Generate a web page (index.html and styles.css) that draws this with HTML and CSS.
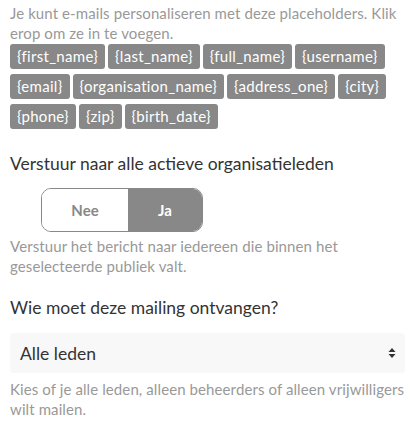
FILE: index.html
```html
<!DOCTYPE html>
<html>
<head>
<meta charset="utf-8">
<link rel="stylesheet" href="styles.css">
</head>
<body>
<div class="page">
  <p class="help first">Je kunt e-mails personaliseren met deze placeholders. Klik erop om ze in te voegen.</p>
  <div class="tags">
    <span class="tag">{first_name}</span>
    <span class="tag">{last_name}</span>
    <span class="tag">{full_name}</span>
    <span class="tag">{username}</span>
    <span class="tag">{email}</span>
    <span class="tag">{organisation_name}</span>
    <span class="tag">{address_one}</span>
    <span class="tag">{city}</span>
    <span class="tag">{phone}</span>
    <span class="tag">{zip}</span>
    <span class="tag">{birth_date}</span>
  </div>

  <div class="field send">
    <label class="label">Verstuur naar alle actieve organisatieleden</label>
    <div class="toggle">
      <span class="opt off">Nee</span>
      <span class="opt on">Ja</span>
    </div>
    <p class="help">Verstuur het bericht naar iedereen die binnen het geselecteerde publiek valt.</p>
  </div>

  <div class="field who">
    <label class="label">Wie moet deze mailing ontvangen?</label>
    <div class="select">
      <span class="value">Alle leden</span>
      <svg class="arrows" width="8" height="12" viewBox="0 0 8 12"><path d="M4 1 L7.5 5 H0.5 Z M4 11 L7.5 7 H0.5 Z" fill="#333"/></svg>
    </div>
    <p class="help">Kies of je alle leden, alleen beheerders of alleen vrijwilligers wilt mailen.</p>
  </div>
</div>
</body>
</html>
```
FILE: styles.css
```css
* { box-sizing: border-box; }
html, body { margin: 0; padding: 0; background: #fff; }
body { font-family: Lato, "Open Sans", sans-serif; color: #333; }
.page { padding: 0 13px 0 10px; }
.help { margin: 0; font-size: 15px; letter-spacing: 0.1px; line-height: 20px; color: #999; }
.help.first { padding-top: 3px; }
.tags { display: flex; flex-wrap: wrap; gap: 5px 3px; margin-top: 1px; width: 385px; }
.tag { background: #888; color: #fff; font-size: 15px; letter-spacing: 0.3px; height: 25px; line-height: 25px; padding: 0 7px; border-radius: 3px; }
.field.send { margin-top: 24px; }
.label { display: block; font-size: 17.5px; line-height: 22px; color: #333; }
.toggle { display: flex; width: 162px; height: 44px; margin: 13px 0 4px 31px; border: 1px solid #888; border-radius: 10px; overflow: hidden; }
.opt { display: flex; align-items: center; justify-content: center; font-weight: 700; font-size: 15px; }
.opt.off { width: 86px; color: #888; background: #fff; }
.opt.on { flex: 1; color: #fff; background: #888; }
.field.who { margin-top: 21px; }
.select { display: flex; align-items: center; justify-content: space-between; height: 40px; margin-top: 14px; padding: 0 9px 0 10px; background: #f8f8f8; border-radius: 4px; }
.select .value { font-size: 17.5px; color: #333; }
.field.who .help { margin-top: 6px; }
```
